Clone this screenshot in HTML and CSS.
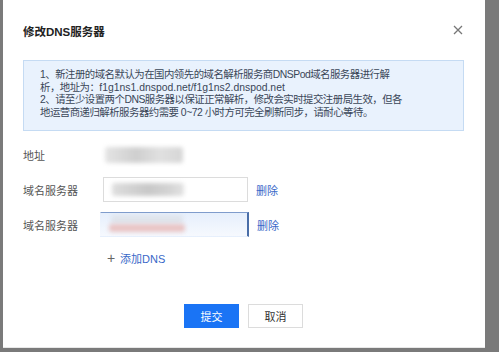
FILE: index.html
```html
<!DOCTYPE html>
<html lang="zh-CN">
<head>
<meta charset="utf-8">
<link rel="stylesheet" href="styles.css">
</head>
<body>
<div class="dialog">
  <div class="header">
    <div class="title">修改DNS服务器</div>
    <svg class="close" width="10" height="10" viewBox="0 0 10 10"><path d="M1 1L9 9M9 1L1 9" stroke="#777" stroke-width="1.3" fill="none"/></svg>
  </div>
  <div class="notice">
    <p>1、新注册的域名默认为在国内领先的域名解析服务商DNSPod域名服务器进行解<br>析，地址为：<span class="en">f1g1ns1.dnspod.net/f1g1ns2.dnspod.net</span></p>
    <p>2、请至少设置两个DNS服务器以保证正常解析，修改会实时提交注册局生效，但各<br>地运营商递归解析服务器约需要 0~72 小时方可完全刷新同步，请耐心等待。</p>
  </div>
  <div class="form">
    <div class="row">
      <div class="label">地址</div>
      <div class="value"><span class="blob b1"></span></div>
    </div>
    <div class="row">
      <div class="label">域名服务器</div>
      <div class="input"><span class="blob b2"></span></div>
      <a class="link">删除</a>
    </div>
    <div class="row">
      <div class="label">域名服务器</div>
      <div class="input focus"><span class="blob b3"></span><span class="blob b4"></span></div>
      <a class="link">删除</a>
    </div>
    <div class="add"><span class="plus">+</span><span class="add-text">添加DNS</span></div>
  </div>
  <div class="actions">
    <button class="btn primary">提交</button>
    <button class="btn">取消</button>
  </div>
</div>
</body>
</html>
```
FILE: styles.css
```css
html, body {
  margin: 0;
  padding: 0;
}
body {
  background: #7a7a7a;
  width: 499px;
  height: 352px;
  overflow: hidden;
  font-family: "Liberation Sans", "Noto Sans CJK SC", sans-serif;
  color: #333;
}
.dialog {
  margin-left: 3px;
  width: 482px;
  height: 348px;
  background: #fff;
  box-sizing: border-box;
  padding: 0 21px 0 20px;
  display: flex;
  flex-direction: column;
  border-bottom: 1px solid #e8e8e8;
}
.header {
  height: 60px;
  display: flex;
  align-items: center;
  justify-content: space-between;
}
.title {
  font-size: 11.5px;
  font-weight: bold;
  color: #222;
  padding-top: 1px;
}
.close {
  margin-right: 1px;
}
.notice {
  height: 71px;
  box-sizing: border-box;
  background: #e9f2fd;
  border: 1px solid #c5dbf3;
  padding: 8px 0 0 16px;
  font-size: 10.4px;
  letter-spacing: -0.5px;
  line-height: 12.5px;
  color: #3a4658;
}
.notice p {
  margin: 0;
  white-space: nowrap;
}
.notice .en {
  letter-spacing: 0;
}
.form {
  margin-top: 11px;
  display: flex;
  flex-direction: column;
  gap: 10px;
}
.row {
  height: 25px;
  display: flex;
  align-items: center;
}
.label {
  width: 80px;
  font-size: 11px;
  color: #555;
}
.value {
  position: relative;
  width: 90px;
  height: 20px;
}
.input {
  position: relative;
  width: 143px;
  height: 23px;
  border: 1px solid #dcdcdc;
  overflow: hidden;
}
.input.focus {
  margin-left: -3px;
  width: 146px;
  border: 1px solid transparent;
  border-right: 2px solid #4a6ea8;
  border-top: 1px solid #7f9ccc;
  background: linear-gradient(to bottom, #e6effc, #f6f9fe);
}
.blob {
  position: absolute;
  border-radius: 3px;
  filter: blur(2px);
}
.b1 {
  left: 2px; top: 2px; width: 78px; height: 16px;
  background: linear-gradient(to right, #e4e4e4, #cfcfcf 40%, #e0e0e0 70%, #d6d6d6);
}
.b2 {
  left: 8px; top: 5px; width: 72px; height: 13px;
  background: linear-gradient(to right, #dedede, #c8c8c8 50%, #d4d4d4 80%, #e2e2e2);
}
.b3 {
  left: 10px; top: 2px; width: 72px; height: 9px;
  background: #dfe4ec;
}
.b4 {
  left: 8px; top: 11px; width: 76px; height: 8px;
  background: #e9c4c4;
}
.link {
  margin-left: 8px;
  font-size: 11px;
  color: #3868c8;
}
.add {
  margin-top: 3px;
  height: 16px;
  display: flex;
  align-items: center;
  padding-left: 84px;
  font-size: 11px;
}
.plus {
  color: #666;
  font-size: 14px;
  width: 12px;
}
.add-text {
  color: #3868c8;
  margin-left: 1px;
}
.actions {
  margin-top: 38px;
  display: flex;
  justify-content: center;
  gap: 9px;
}
.btn {
  width: 55px;
  height: 24px;
  border: 1px solid #dcdcdc;
  background: #fff;
  font-family: inherit;
  font-size: 11px;
  color: #333;
  padding: 0;
}
.btn.primary {
  background: #1a74f5;
  border-color: #1a74f5;
  color: #fff;
}
```
